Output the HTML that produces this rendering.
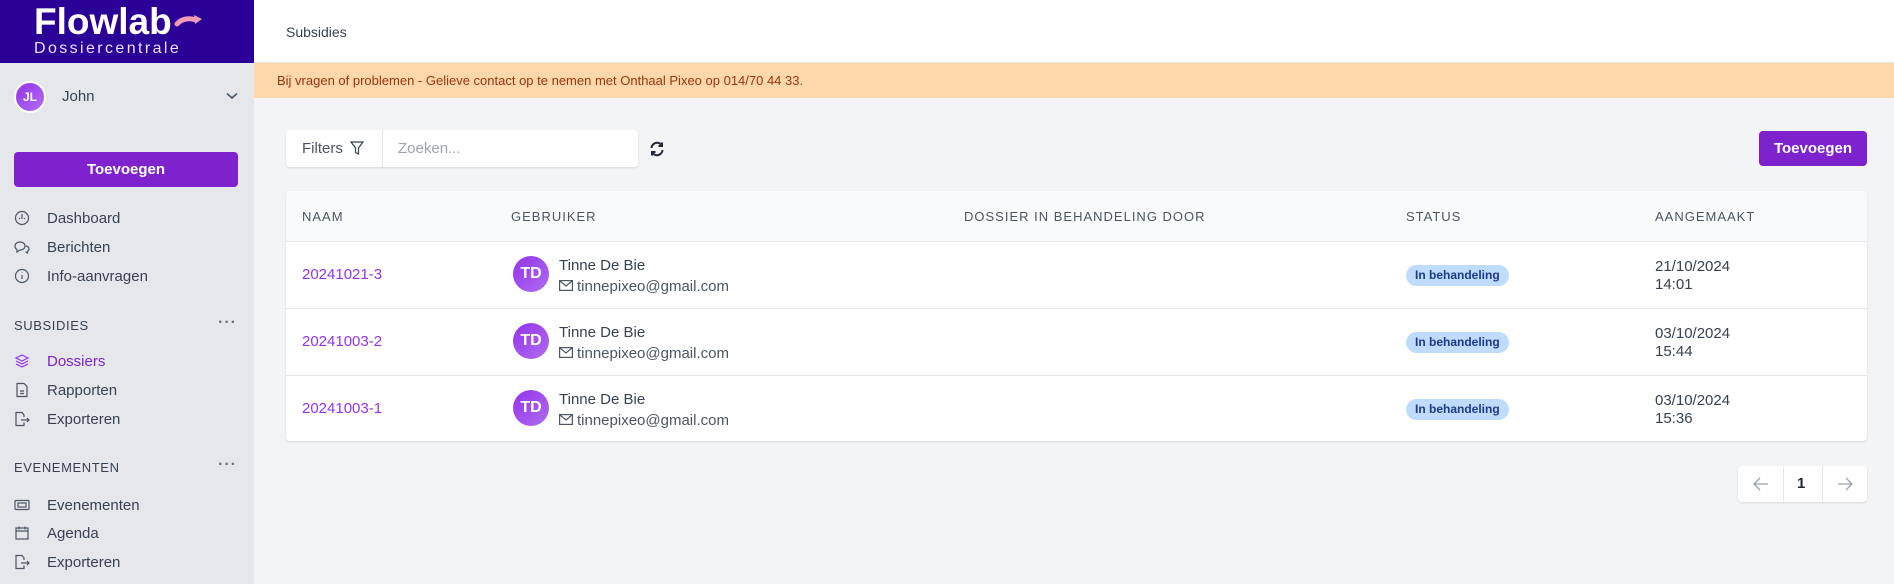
<!DOCTYPE html>
<html><head><meta charset="utf-8"><style>
*{box-sizing:border-box;margin:0;padding:0}
body{width:1894px;height:584px;overflow:hidden;font-family:"Liberation Sans",sans-serif;background:#f3f4f6;position:relative;color:#374151}
.abs{position:absolute}
.side{left:0;top:0;width:254px;height:584px;background:#e5e7eb}
.logo{left:0;top:0;width:254px;height:63px;background:#2a0096}
.nav{position:absolute;left:0;font-size:15px;color:#374151;display:flex;align-items:center;height:24px}
.nav svg{position:absolute;left:14px;width:16px;height:16px}
.nav span{position:absolute;left:47px;white-space:nowrap}
.sec{position:absolute;left:14px;font-size:13px;letter-spacing:.6px;color:#374151}
.dots{position:absolute;left:218px;font-size:16px;font-weight:bold;color:#6b7280;letter-spacing:1px}
.th{position:absolute;top:209px;font-size:13px;letter-spacing:1px;color:#4b5563}
.row{position:absolute;left:286px;width:1581px;height:67px;border-top:1px solid #e5e7eb}
.lnk{position:absolute;left:16px;top:24px;font-size:15px;color:#9333ea}
.av{position:absolute;left:227px;top:14px;width:36px;height:36px;border-radius:50%;background:linear-gradient(135deg,#9333ea,#b06cf0);color:#fff;font-weight:bold;font-size:16px;display:flex;align-items:center;justify-content:center}
.nm{position:absolute;left:273px;top:15px;font-size:15px;color:#374151}
.em{position:absolute;left:273px;top:36px;font-size:15px;color:#4b5563;white-space:nowrap}
.badge{position:absolute;left:1120px;top:23px;height:21px;padding:0 9px;border-radius:11px;background:#bfdbfe;color:#1e3a8a;font-size:12px;font-weight:bold;line-height:21px}
.dt{position:absolute;left:1369px;top:16px;font-size:15px;line-height:18px;color:#374151}
</style></head><body>
<div class="abs side"></div>
<div class="abs logo">
 <div class="abs" style="left:34px;top:3px;font-size:37px;line-height:38px;font-weight:bold;color:#fff;letter-spacing:0">Flowlab</div>
 <svg class="abs" style="left:174px;top:12px" width="30" height="20" viewBox="0 0 30 20"><path d="M3 12 C8 6,16 6,22 8" stroke="#f29bb5" stroke-width="5" fill="none" stroke-linecap="round"/><path d="M20 3 L28 7 L21 12 Z" fill="#f29bb5"/></svg>
 <div class="abs" style="left:34px;top:40px;font-size:16px;color:#e9e3ff;letter-spacing:2.4px">Dossiercentrale</div>
</div>
<div class="abs" style="left:14px;top:81px;width:32px;height:32px;border-radius:50%;border:2px solid #fff;background:linear-gradient(135deg,#9333ea,#b26ef2);color:#fff;font-size:12px;font-weight:bold;display:flex;align-items:center;justify-content:center">JL</div>
<div class="abs" style="left:62px;top:88px;font-size:15px;color:#374151">John</div>
<svg class="abs" style="left:226px;top:92px" width="12" height="8" viewBox="0 0 12 8"><path d="M1 1.5 L6 6 L11 1.5" stroke="#4b5563" stroke-width="1.6" fill="none"/></svg>
<div class="abs" style="left:14px;top:152px;width:224px;height:35px;background:#7e22ce;border-radius:4px;color:#fff;font-weight:bold;font-size:15px;display:flex;align-items:center;justify-content:center">Toevoegen</div>

<div class="nav" style="top:206px"><svg viewBox="0 0 16 16" fill="none" stroke="#4b5563" stroke-width="1.2"><circle cx="8" cy="8" r="6.5"/><path d="M8 4v5M5 8l1 1M11 8l-1 1"/></svg><span>Dashboard</span></div>
<div class="nav" style="top:235px"><svg viewBox="0 0 16 16" fill="none" stroke="#4b5563" stroke-width="1.2"><path d="M1 7c0-3 3-4 5-4s5 1 5 4-3 4-5 4l-3 2v-2.5C2 10 1 9 1 7z"/><path d="M12 7c2 .5 3 1.5 3 3 0 1-1 2-1.5 2.3V14l-2-1.2"/></svg><span>Berichten</span></div>
<div class="nav" style="top:264px"><svg viewBox="0 0 16 16" fill="none" stroke="#4b5563" stroke-width="1.2"><circle cx="8" cy="8" r="6.5"/><path d="M8 7v4M8 4.5v.5"/></svg><span>Info-aanvragen</span></div>

<div class="sec" style="top:318px">SUBSIDIES</div><div class="dots" style="top:314px">···</div>
<div class="nav" style="top:349px;color:#7e22ce"><svg viewBox="0 0 16 16" fill="none" stroke="#9333ea" stroke-width="1.2"><path d="M8 2l6 3-6 3-6-3z"/><path d="M2 8l6 3 6-3M2 11l6 3 6-3"/></svg><span>Dossiers</span></div>
<div class="nav" style="top:378px"><svg viewBox="0 0 16 16" fill="none" stroke="#4b5563" stroke-width="1.2"><path d="M3 1.5h7l3 3v10H3z"/><path d="M6 9h4M6 11.5h4"/></svg><span>Rapporten</span></div>
<div class="nav" style="top:407px"><svg viewBox="0 0 16 16" fill="none" stroke="#4b5563" stroke-width="1.2"><path d="M10 6V4L8 1.5H2v13h8v-3"/><path d="M7 9h8M13 7l2 2-2 2"/></svg><span>Exporteren</span></div>

<div class="sec" style="top:460px">EVENEMENTEN</div><div class="dots" style="top:456px">···</div>
<div class="nav" style="top:493px"><svg viewBox="0 0 16 16" fill="none" stroke="#4b5563" stroke-width="1.2"><rect x="1" y="3.5" width="14" height="9" rx="1"/><rect x="4" y="6" width="8" height="4"/></svg><span>Evenementen</span></div>
<div class="nav" style="top:521px"><svg viewBox="0 0 16 16" fill="none" stroke="#4b5563" stroke-width="1.2"><rect x="2" y="3" width="12" height="11"/><path d="M2 6h12M5 1.5v3M11 1.5v3"/></svg><span>Agenda</span></div>
<div class="nav" style="top:550px"><svg viewBox="0 0 16 16" fill="none" stroke="#4b5563" stroke-width="1.2"><path d="M10 6V4L8 1.5H2v13h8v-3"/><path d="M7 9h8M13 7l2 2-2 2"/></svg><span>Exporteren</span></div>

<div class="abs" style="left:254px;top:0;width:1640px;height:63px;background:#fff;border-bottom:1px solid #e5e7eb"></div>
<div class="abs" style="left:286px;top:24px;font-size:14px;color:#374151">Subsidies</div>
<div class="abs" style="left:254px;top:63px;width:1640px;height:35px;background:#fed7aa"></div>
<div class="abs" style="left:277px;top:73px;font-size:13px;color:#9a3412">Bij vragen of problemen - Gelieve contact op te nemen met Onthaal Pixeo op 014/70 44 33.</div>

<div class="abs" style="left:286px;top:130px;width:352px;height:37px;background:#fff;border-radius:4px;box-shadow:0 1px 2px rgba(0,0,0,.12)"></div>
<div class="abs" style="left:382px;top:130px;width:1px;height:37px;background:#e5e7eb"></div>
<div class="abs" style="left:302px;top:140px;font-size:15px;color:#4b5563">Filters</div>
<svg class="abs" style="left:350px;top:141px" width="14" height="15" viewBox="0 0 14 15"><path d="M1 1h12L8.5 7v6l-3-1.5V7z" fill="none" stroke="#374151" stroke-width="1.2"/></svg>
<div class="abs" style="left:398px;top:140px;font-size:15px;color:#9ca3af">Zoeken...</div>
<svg class="abs" style="left:649px;top:141px" width="16" height="16" viewBox="0 0 16 16" fill="none" stroke="#1f2937" stroke-width="2"><path d="M2.5 7A5.5 5.5 0 0 1 13 5M13.5 9A5.5 5.5 0 0 1 3 11"/><path d="M13 1.5V5H9.5M3 14.5V11h3.5"/></svg>

<div class="abs" style="left:1759px;top:131px;width:108px;height:35px;background:#7e22ce;border-radius:4px;color:#fff;font-weight:bold;font-size:15px;display:flex;align-items:center;justify-content:center">Toevoegen</div>

<div class="abs" style="left:286px;top:191px;width:1581px;height:250px;background:#fff;border-radius:4px;box-shadow:0 1px 2px rgba(0,0,0,.12);overflow:hidden">
 <div style="height:50px;background:#f9fafb"></div>
</div>
<div class="th" style="left:302px">NAAM</div>
<div class="th" style="left:511px">GEBRUIKER</div>
<div class="th" style="left:964px">DOSSIER IN BEHANDELING DOOR</div>
<div class="th" style="left:1406px">STATUS</div>
<div class="th" style="left:1655px">AANGEMAAKT</div>

<div class="row" style="top:241px"><div class="lnk">20241021-3</div><div class="av">TD</div><div class="nm">Tinne De Bie</div><div class="em"><svg width="14" height="11" viewBox="0 0 14 11" style="margin-right:4px"><rect x=".6" y=".6" width="12.8" height="9.8" fill="none" stroke="#4b5563" stroke-width="1.2"/><path d="M1 1l6 5 6-5" fill="none" stroke="#4b5563" stroke-width="1.2"/></svg>tinnepixeo@gmail.com</div><div class="badge">In behandeling</div><div class="dt">21/10/2024<br>14:01</div></div>
<div class="row" style="top:308px"><div class="lnk">20241003-2</div><div class="av">TD</div><div class="nm">Tinne De Bie</div><div class="em"><svg width="14" height="11" viewBox="0 0 14 11" style="margin-right:4px"><rect x=".6" y=".6" width="12.8" height="9.8" fill="none" stroke="#4b5563" stroke-width="1.2"/><path d="M1 1l6 5 6-5" fill="none" stroke="#4b5563" stroke-width="1.2"/></svg>tinnepixeo@gmail.com</div><div class="badge">In behandeling</div><div class="dt">03/10/2024<br>15:44</div></div>
<div class="row" style="top:375px"><div class="lnk">20241003-1</div><div class="av">TD</div><div class="nm">Tinne De Bie</div><div class="em"><svg width="14" height="11" viewBox="0 0 14 11" style="margin-right:4px"><rect x=".6" y=".6" width="12.8" height="9.8" fill="none" stroke="#4b5563" stroke-width="1.2"/><path d="M1 1l6 5 6-5" fill="none" stroke="#4b5563" stroke-width="1.2"/></svg>tinnepixeo@gmail.com</div><div class="badge">In behandeling</div><div class="dt">03/10/2024<br>15:36</div></div>

<div class="abs" style="left:1738px;top:466px;width:129px;height:36px;background:#fff;border-radius:4px;box-shadow:0 1px 2px rgba(0,0,0,.12)"></div>
<div class="abs" style="left:1783px;top:466px;width:1px;height:36px;background:#e5e7eb"></div>
<div class="abs" style="left:1822px;top:466px;width:1px;height:36px;background:#e5e7eb"></div>
<svg class="abs" style="left:1753px;top:477px" width="16" height="14" viewBox="0 0 16 14" fill="none" stroke="#9ca3af" stroke-width="1.3"><path d="M15 7H1M7 1L1 7l6 6"/></svg>
<div class="abs" style="left:1797px;top:475px;font-size:15px;font-weight:bold;color:#1f2937">1</div>
<svg class="abs" style="left:1837px;top:477px" width="16" height="14" viewBox="0 0 16 14" fill="none" stroke="#9ca3af" stroke-width="1.3"><path d="M1 7h14M9 1l6 6-6 6"/></svg>
</body></html>
